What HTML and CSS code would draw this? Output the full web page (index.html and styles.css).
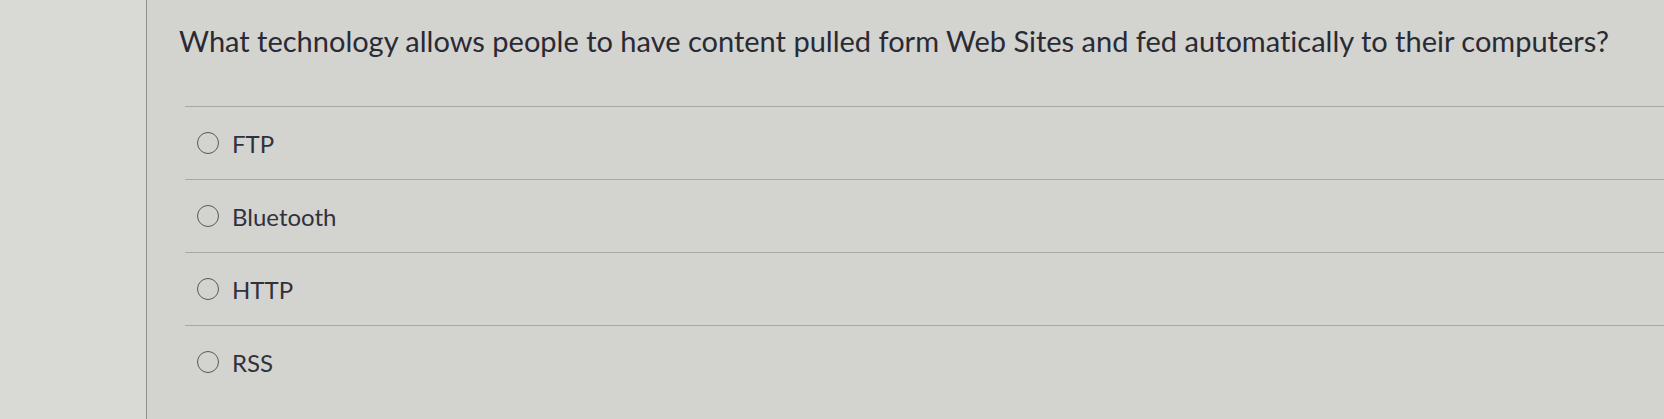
FILE: index.html
```html
<!DOCTYPE html>
<html lang="en">
<head>
    <meta charset="UTF-8">
    <title>Quiz question</title>
    <link rel="stylesheet" href="styles.css">
</head>
<body>
    <div class="page">
        <div class="side"></div>

        <div class="question">
            <div class="prompt">What technology allows people to have content pulled form Web Sites and fed automatically to their computers?</div>

            <ul class="answers">
                <li class="answer"><span class="radio"></span>FTP</li>
                <li class="answer"><span class="radio"></span>Bluetooth</li>
                <li class="answer"><span class="radio"></span>HTTP</li>
                <li class="answer"><span class="radio"></span>RSS</li>
            </ul>
        </div>
    </div>
</body>
</html>
```

FILE: styles.css
```css
:root {
    --paper: #d3d3cf;
    --paper-light: #d9d9d6;
    --rule: #a7a7a3;
    --ink: #2a2a34;
}

body {
    margin: 0;
    font-family: Lato, 'Open Sans', sans-serif;
    font-variant-ligatures: none;
    background: var(--paper);
    color: var(--ink);
}

.page {
    display: flex;
    height: 419px;
    overflow: hidden;
}

.side {
    width: 146px;
    flex: none;
    background: var(--paper-light);
    border-right: 1px solid #8f8f8c;
}

.question {
    flex: 1;
    padding-left: 32px;
}

.prompt {
    padding-top: 24px;
    padding-bottom: 48px;
    font-size: 29px;
    line-height: 34px;
    white-space: nowrap;
}

.answers {
    list-style: none;
    margin: 0 0 0 6px;
    padding: 0;
    border-top: 1px solid var(--rule);
}

.answer {
    display: flex;
    align-items: center;
    gap: 13px;
    height: 72px;
    padding-left: 12px;
    font-size: 24px;
    color: #31313b;
    border-bottom: 1px solid var(--rule);
}

.answer:last-child {
    border-bottom: none;
}

.radio {
    width: 20px;
    height: 20px;
    border: 1.5px solid #58585a;
    border-radius: 50%;
    flex: none;
}
```
